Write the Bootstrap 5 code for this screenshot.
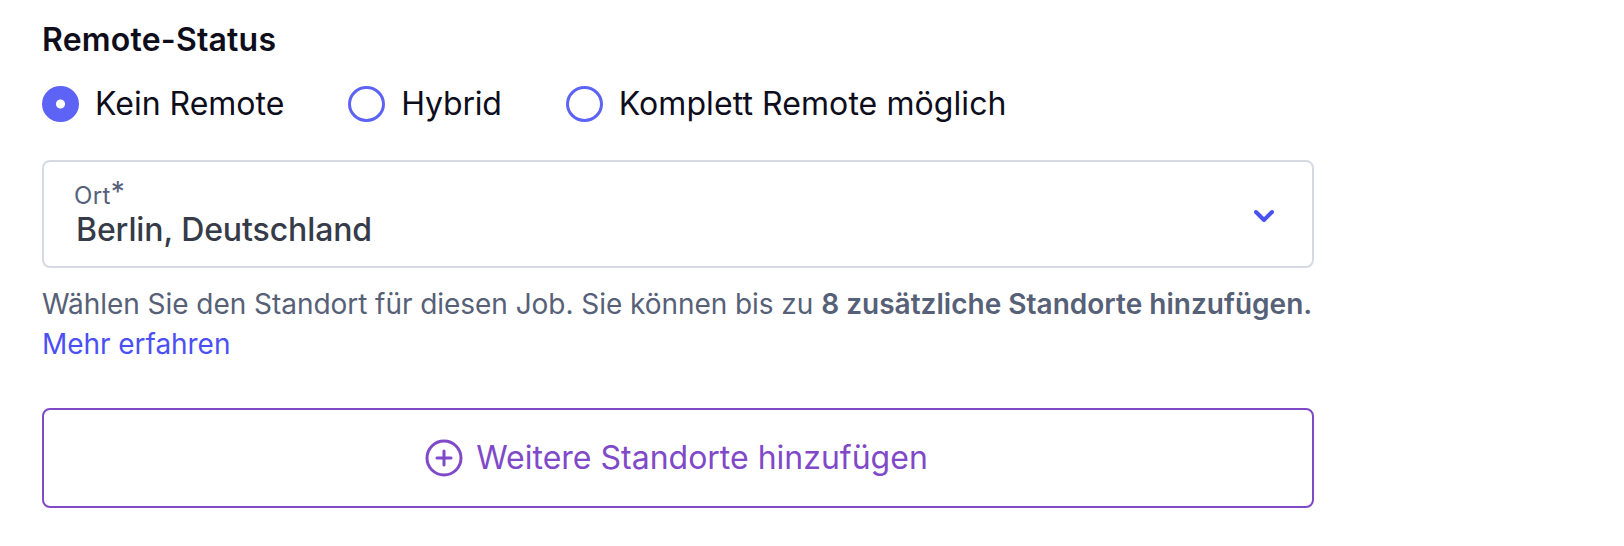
<!DOCTYPE html>
<html lang="de">
<head>
<meta charset="utf-8">
<meta name="viewport" content="width=device-width, initial-scale=1">
<title>Remote-Status</title>
<link href="https://cdn.jsdelivr.net/npm/bootstrap@5.3.0/dist/css/bootstrap.min.css" rel="stylesheet">
<script src="https://cdn.jsdelivr.net/npm/bootstrap@5.3.0/dist/js/bootstrap.bundle.min.js" defer></script>
<style>
body{font-family:Inter,sans-serif;color:#0e0d1b;background:#fff;overflow:hidden;-webkit-font-smoothing:antialiased}
.job-form{width:1272px;margin-left:42px;padding-top:20px}
.status-title{font-size:32px;font-weight:600;line-height:40px;letter-spacing:.2px}
.options{margin-top:24px;height:40px;gap:64px;font-size:32px;line-height:40px}
.options .form-check-input{width:37px;height:36px;margin-bottom:1px!important;border:3px solid #5c63f5;box-shadow:none}
.options .form-check-input:checked{background:radial-gradient(circle,#fff 4px,#5c63f5 5px)}
.opt-hybrid{letter-spacing:-.2px}
.opt-full{letter-spacing:.08px}
.place{margin-top:36px;height:108px;border:2px solid #d7dae3;border-radius:8px;padding:4px 36px 0 30px}
.place-label{font-size:24px;line-height:28px;color:#56607a;letter-spacing:.4px}
.place-label sup{font-size:28px;line-height:0;top:0;vertical-align:2px}
.place-value{font-size:32px;line-height:40px;font-weight:500;color:#353b48;padding-left:2px;letter-spacing:-.1px}
.hint{margin-top:16px;font-size:28px;line-height:40px;color:#566077;letter-spacing:-.05px}
.hint strong{font-weight:600;letter-spacing:.02px}
.hint a{color:#4b50f5}
.add-btn,.add-btn:hover{margin-top:44px;height:100px;border:2px solid #7f49c8;border-radius:8px;color:#7f49c8;font-size:32px;gap:13px;padding-right:15px}
</style>
</head>
<body>
<form class="job-form">
<div class="status-title"><span>Remote-Status</span></div>
<div class="options d-flex align-items-center">
<label class="d-flex align-items-center gap-3"><input class="form-check-input m-0" type="radio" name="remote" checked><span>Kein Remote</span></label>
<label class="d-flex align-items-center gap-3"><input class="form-check-input m-0" type="radio" name="remote"><span class="opt-hybrid">Hybrid</span></label>
<label class="d-flex align-items-center gap-3"><input class="form-check-input m-0" type="radio" name="remote"><span class="opt-full">Komplett Remote möglich</span></label>
</div>
<div class="place d-flex align-items-center justify-content-between">
<div><div class="place-label">Ort<sup>*</sup></div><div class="place-value">Berlin, Deutschland</div></div>
<svg width="24" height="16" viewBox="0 0 24 16" fill="none" stroke="#4b50f5" stroke-width="4" stroke-linecap="round" stroke-linejoin="round"><path d="M4 4l8 8 8-8"/></svg>
</div>
<div class="hint"><div class="text-nowrap">Wählen Sie den Standort für diesen Job. Sie können bis zu <strong>8 zusätzliche Standorte hinzufügen.</strong></div><a class="text-decoration-none" href="#">Mehr erfahren</a></div>
<button type="button" class="add-btn btn w-100 d-flex align-items-center justify-content-center">
<svg width="38" height="38" viewBox="0 0 38 38" fill="none" stroke="currentColor" stroke-width="3" stroke-linecap="round"><circle cx="19" cy="19" r="17"/><path d="M19 12v14M12 19h14"/></svg>
<span>Weitere Standorte hinzufügen</span></button>
</form>
</body>
</html>
